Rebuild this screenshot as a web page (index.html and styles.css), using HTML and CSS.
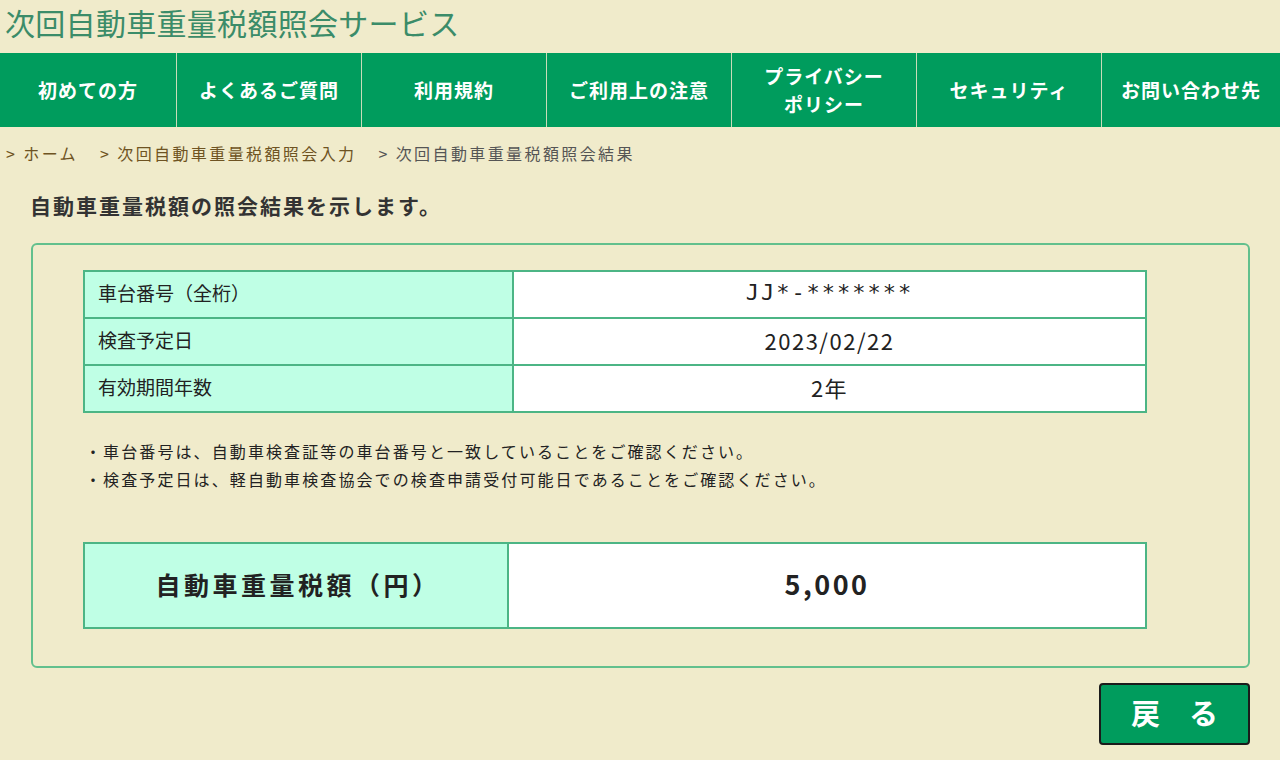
FILE: index.html
```html
<!DOCTYPE html>
<html lang="ja">
<head>
<meta charset="utf-8">
<title>次回自動車重量税額照会サービス</title>
<link rel="stylesheet" href="styles.css">
</head>
<body>
<header class="site-title">次回自動車重量税額照会サービス</header>
<nav class="gnav">
  <a class="gnav-item">初めての方</a>
  <a class="gnav-item">よくあるご質問</a>
  <a class="gnav-item">利用規約</a>
  <a class="gnav-item">ご利用上の注意</a>
  <a class="gnav-item">プライバシー<br>ポリシー</a>
  <a class="gnav-item">セキュリティ</a>
  <a class="gnav-item">お問い合わせ先</a>
</nav>
<div class="breadcrumb">
  <span class="crumb crumb-link">&gt; ホーム</span>
  <span class="crumb crumb-link">&gt; 次回自動車重量税額照会入力</span>
  <span class="crumb crumb-current">&gt; 次回自動車重量税額照会結果</span>
</div>
<h1 class="lead">自動車重量税額の照会結果を示します。</h1>
<section class="panel">
  <table class="info">
    <tr><th>車台番号（全桁）</th><td class="mono">JJ*-*******</td></tr>
    <tr><th>検査予定日</th><td>2023/02/22</td></tr>
    <tr><th>有効期間年数</th><td>2年</td></tr>
  </table>
  <ul class="notes">
    <li>・車台番号は、自動車検査証等の車台番号と一致していることをご確認ください。</li>
    <li>・検査予定日は、軽自動車検査協会での検査申請受付可能日であることをご確認ください。</li>
  </ul>
  <table class="tax">
    <tr><th>自動車重量税額（円）</th><td>5,000</td></tr>
  </table>
</section>
<div class="actions">
  <button class="back-btn">戻　る</button>
</div>
</body>
</html>
```

FILE: styles.css
```css
* { box-sizing: border-box; }
body {
  margin: 0;
  background: #f0ebcb;
  font-family: "Noto Sans CJK JP", "Noto Sans", sans-serif;
  color: #222;
  width: 1280px;
}
.site-title {
  height: 53px;
  padding-left: 5px;
  font-size: 30px;
  line-height: 44px;
  color: #3b8c69;
  letter-spacing: 0.3px;
}
.gnav {
  display: grid;
  grid-template-columns: 176px repeat(5, 184px) 178px;
  gap: 1px;
  background: #c9dcb9;
  height: 74px;
}
.gnav-item {
  background: #009c5d;
  color: #fff;
  font-weight: bold;
  font-size: 19px;
  letter-spacing: 1px;
  line-height: 28px;
  display: flex;
  align-items: center;
  justify-content: center;
  text-align: center;
}
.breadcrumb {
  padding: 14px 0 0 6px;
  font-size: 16px;
  letter-spacing: 2.4px;
  line-height: 24px;
  display: flex;
  gap: 22px;
}
.crumb-link { color: #6e5322; }
.crumb-current { color: #555; }
.lead {
  margin: 28px 0 0 30px;
  font-size: 21px;
  letter-spacing: 2px;
  line-height: 24px;
  font-weight: bold;
  color: #333;
}
.panel {
  margin: 26px 0 0 31px;
  width: 1219px;
  border: 2px solid #62c08d;
  border-radius: 6px;
  padding: 25px 101px 37px 50px;
}
table {
  border-collapse: collapse;
  width: 1064px;
}
.info th, .info td {
  border: 2px solid #4cb585;
  height: 47px;
}
.info th {
  width: 429px;
  background: #bfffe5;
  text-align: left;
  font-weight: normal;
  font-size: 19px;
  padding: 0 0 4px 13px;
}
.info td {
  background: #fff;
  text-align: center;
  font-size: 22px;
  letter-spacing: 1.5px;
  padding-bottom: 5px;
}
.info td.mono {
  font-family: "DejaVu Sans Mono", monospace;
  font-size: 22px;
  letter-spacing: 2px;
}
.notes {
  list-style: none;
  margin: 24px 0 0 0;
  padding: 0 0 0 2px;
  font-size: 16px;
  letter-spacing: 2.1px;
  line-height: 28px;
  color: #222;
}
.tax {
  margin-top: 49px;
}
.tax th, .tax td {
  border: 2px solid #4cb585;
  height: 85px;
}
.tax th {
  width: 424px;
  background: #bfffe5;
  font-size: 25px;
  letter-spacing: 3.5px;
  font-weight: bold;
  padding: 0 0 4px 4px;
}
.tax td {
  background: #fff;
  font-size: 27px;
  letter-spacing: 2.5px;
  font-weight: bold;
  text-align: center;
  padding: 0 0 4px 0;
}
.actions {
  display: flex;
  justify-content: flex-end;
  width: 1250px;
  margin-top: 15px;
}
.back-btn {
  width: 151px;
  height: 62px;
  background: #009c5d;
  border: 2px solid #1b1b1b;
  border-radius: 4px;
  color: #fff;
  font-family: "Noto Sans CJK JP", sans-serif;
  font-weight: bold;
  font-size: 29px;
  line-height: 1;
  padding: 0 0 4px 0;
}
```
